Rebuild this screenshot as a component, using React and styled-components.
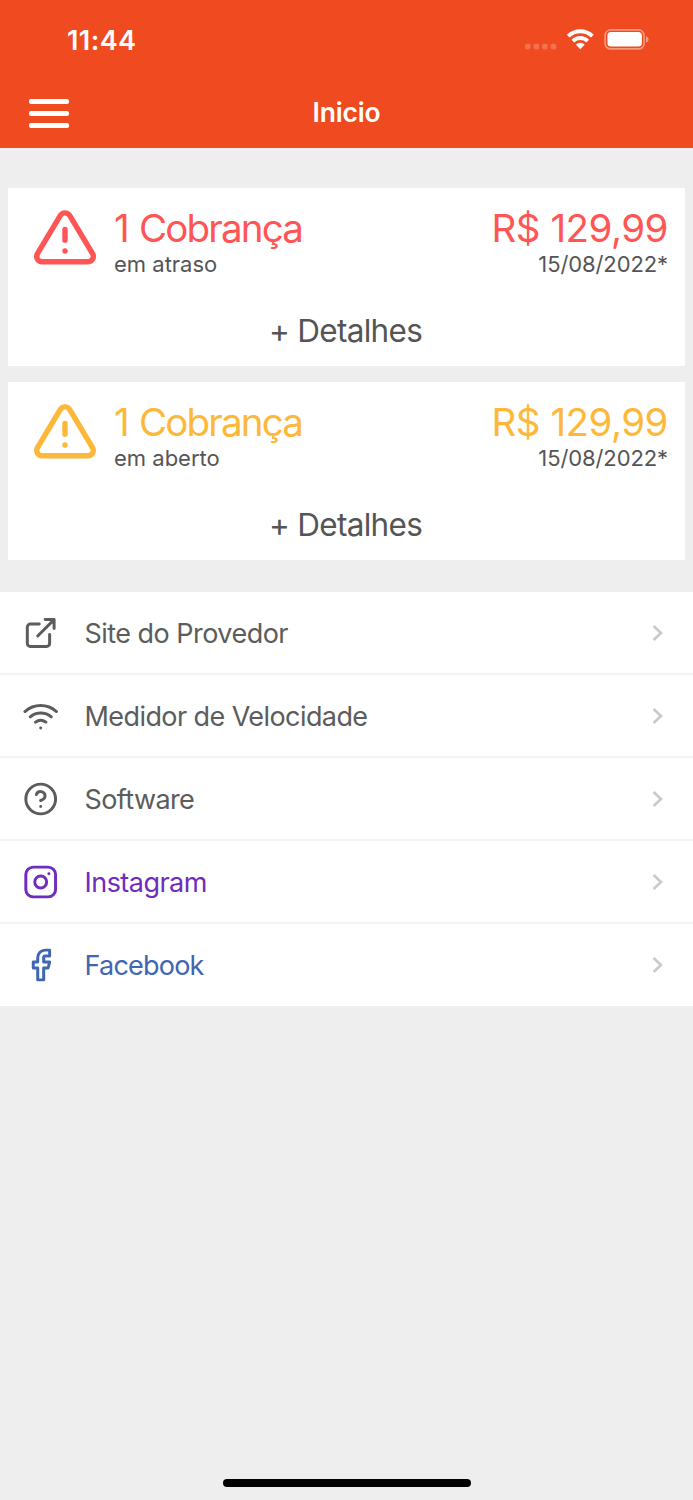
import React from 'react';
import styled, { createGlobalStyle } from 'styled-components';

const COLORS = {
  BRAND: '#f04a20',
  BACKGROUND: '#eeeeee',
  WHITE: '#ffffff',
  TEXT: '#555555',
  MENU: '#5c5c5c',
  LATE: '#ff5555',
  OPEN: '#fdb83a',
  INSTAGRAM: '#6f2cbe',
  FACEBOOK: '#4066b3',
  CHEVRON: '#c9c9ce',
  DIVIDER: '#f4f4f4',
};

const GlobalStyle = createGlobalStyle`
  body {
    margin: 0;
    background: ${COLORS.BACKGROUND};
    font-family: Inter, 'Liberation Sans', sans-serif;
  }
`;

const Screen = styled.div`
  display: flex;
  flex-direction: column;
  width: 693px;
  height: 1500px;
  overflow: hidden;

  background: ${COLORS.BACKGROUND};
`;

const Header = styled.header`
  height: 147.5px;
  flex: none;

  color: ${COLORS.WHITE};
  background: ${COLORS.BRAND};
`;

const StatusBar = styled.div`
  display: flex;
  align-items: center;
  justify-content: space-between;
  height: 79px;
  padding: 0 44px 0 67px;
`;

const Time = styled.span`
  margin-top: 1px;

  font-size: 27px;
  font-weight: 600;
  letter-spacing: 0.4px;
`;

const NavBar = styled.div`
  display: grid;
  grid-template-columns: 80px 1fr 80px;
  align-items: center;
  height: 67px;
`;

const MenuButton = styled.button`
  display: flex;
  flex-direction: column;
  gap: 7.8px;
  width: 40.5px;
  margin: 2px 0 0 28.5px;
  padding: 0;

  background: none;
  border: 0;
`;

const MenuBar = styled.span`
  height: 4.4px;

  background: ${COLORS.WHITE};
  border-radius: 2px;
`;

const Title = styled.h1`
  margin: -2px 0 0;

  font-size: 26.5px;
  font-weight: 600;
  letter-spacing: -0.2px;
  text-align: center;
`;

const Cards = styled.section`
  display: flex;
  flex-direction: column;
  gap: 16.5px;
  padding: 40.5px 8px 32px;
`;

const Card = styled.article`
  height: 177.5px;
  box-sizing: border-box;
  padding: 17px 17px 0 24px;

  color: ${COLORS.TEXT};
  background: ${COLORS.WHITE};
`;

const Summary = styled.div`
  display: flex;
`;

const SummaryText = styled.div`
  flex: 1;
  margin-left: ${({ $end }) => ($end ? 0 : 16)}px;

  text-align: ${({ $end }) => ($end ? 'right' : 'left')};
`;

const Amount = styled.div`
  color: ${({ $color }) => $color};
  font-size: 38.5px;
  line-height: 46px;
  letter-spacing: ${({ $spacing }) => $spacing}px;
  word-spacing: ${({ $wordSpacing = 0 }) => $wordSpacing}px;
  white-space: nowrap;
`;

const Caption = styled.div`
  font-size: 22px;
  line-height: 27px;
  letter-spacing: ${({ $spacing }) => $spacing}px;
`;

const Details = styled.div`
  margin: 33px -8px 0 -17px;

  font-size: 31.5px;
  line-height: 40px;
  letter-spacing: -0.7px;
  text-align: center;
`;

const Menu = styled.nav`
  background: ${COLORS.WHITE};
`;

const MenuItem = styled.div`
  display: flex;
  align-items: center;
  height: ${({ $last }) => ($last ? 82.5 : 83)}px;
  box-sizing: border-box;
  padding: ${({ $last }) => ($last ? 1 : 2)}px 28px 0 23px;

  color: ${({ $color }) => $color};
  border-bottom: ${({ $last }) => ($last ? 0 : 2)}px solid ${COLORS.DIVIDER};
`;

const MenuLabel = styled.span`
  flex: 1;
  margin-left: 25.5px;

  font-size: 27px;
  letter-spacing: ${({ $spacing }) => $spacing}px;
`;

const HomeIndicator = styled.div`
  width: 248px;
  height: 8.5px;
  margin: auto auto 13px;

  background: #000000;
  border-radius: 5px;
`;

const Feather = ({ children }) => (
  <svg
    width="36"
    height="36"
    viewBox="0.1 -0.1 24.2 24.2"
    fill="none"
    stroke="currentColor"
    strokeWidth="2"
    strokeLinecap="round"
    strokeLinejoin="round"
  >
    {children}
  </svg>
);

const AlertIcon = styled.svg`
  flex: none;
  width: 66px;
  height: 66px;

  color: ${({ $color }) => $color};
`;

const StatusIcons = () => (
  <svg width="126" height="30" viewBox="523 25 126 30" fill="none">
    <g fill="#fff" fillOpacity="0.22">
      <rect x="525" y="43.8" width="5.6" height="5.6" rx="2" />
      <rect x="533.6" y="43.8" width="5.6" height="5.6" rx="2" />
      <rect x="542.1" y="43.8" width="5.6" height="5.6" rx="2" />
      <rect x="550.7" y="43.8" width="5.6" height="5.6" rx="2" />
    </g>
    <g stroke="#fff" strokeWidth="4">
      <path d="M568.2 36.2a17.2 17.2 0 0 1 24.2 0" />
      <path d="M572.9 41.1a10.6 10.6 0 0 1 14.8 0" />
    </g>
    <path d="M575.9 44.5a6.4 6.4 0 0 1 8.8 0l-4.4 4.7z" fill="#fff" />
    <rect
      x="605.1"
      y="29.9"
      width="39"
      height="19"
      rx="5.5"
      stroke="#fff"
      strokeOpacity="0.42"
      strokeWidth="1.7"
    />
    <rect x="607.4" y="32.1" width="34.5" height="14.5" rx="3.5" fill="#fff" />
    <path d="M646 36.2c3.4 1.2 3.4 5.2 0 6.4z" fill="#fff" fillOpacity="0.45" />
  </svg>
);

const CHARGES = [
  { status: 'em atraso', color: COLORS.LATE },
  { status: 'em aberto', color: COLORS.OPEN },
];

const MENU_ITEMS = [
  {
    label: 'Site do Provedor',
    color: COLORS.MENU,
    spacing: -0.53,
    icon: (
      <Feather>
        <path d="M18 13v6a2 2 0 0 1-2 2H5a2 2 0 0 1-2-2V8a2 2 0 0 1 2-2h6" />
        <path d="M15 3h6v6M10 14L21 3" />
      </Feather>
    ),
  },
  {
    label: 'Medidor de Velocidade',
    color: COLORS.MENU,
    spacing: -0.58,
    icon: (
      <Feather>
        <path d="M5 12.55a11 11 0 0 1 14.08 0M1.42 9a16 16 0 0 1 21.16 0M8.53 16.11a6 6 0 0 1 6.95 0M12 20h.01" />
      </Feather>
    ),
  },
  {
    label: 'Software',
    color: COLORS.MENU,
    spacing: -0.6,
    icon: (
      <Feather>
        <circle cx="12" cy="12" r="10" />
        <path d="M9.09 9a3 3 0 0 1 5.83 1c0 2-3 3-3 3M12 17h.01" />
      </Feather>
    ),
  },
  {
    label: 'Instagram',
    color: COLORS.INSTAGRAM,
    spacing: -0.53,
    icon: (
      <Feather>
        <rect x="2" y="2" width="20" height="20" rx="5" />
        <circle cx="12" cy="12" r="4" />
        <path d="M17.5 6.5h.01" />
      </Feather>
    ),
  },
  {
    label: 'Facebook',
    color: COLORS.FACEBOOK,
    spacing: -0.78,
    icon: (
      <Feather>
        <path d="M18 2h-3a5 5 0 0 0-5 5v3H7v4h3v8h4v-8h3l1-4h-4V7a1 1 0 0 1 1-1h3z" />
      </Feather>
    ),
  },
];

const Chevron = () => (
  <svg width="14" height="20" viewBox="0 0 14 20" fill="none">
    <path d="M2.6 3L10 10l-7.4 7" stroke={COLORS.CHEVRON} strokeWidth="2.6" />
  </svg>
);

const Charge = ({ status, color }) => (
  <Card>
    <Summary>
      <AlertIcon
        $color={color}
        viewBox="-0.2 0 24.4 24.4"
        fill="none"
        stroke="currentColor"
        strokeWidth="2"
        strokeLinecap="round"
        strokeLinejoin="round"
      >
        <path d="M10.29 3.86L1.82 18a2 2 0 0 0 1.71 3h16.94a2 2 0 0 0 1.71-3L13.71 3.86a2 2 0 0 0-3.42 0z" />
        <path d="M12 9v4M12 17h.01" />
      </AlertIcon>
      <SummaryText>
        <Amount $color={color} $spacing={-1.8} $wordSpacing={2}>
          1 Cobrança
        </Amount>
        <Caption $spacing={0}>{status}</Caption>
      </SummaryText>
      <SummaryText $end>
        <Amount $color={color} $spacing={-0.5}>
          R$ 129,99
        </Amount>
        <Caption $spacing={-0.1}>15/08/2022*</Caption>
      </SummaryText>
    </Summary>
    <Details>+ Detalhes</Details>
  </Card>
);

const App = () => (
  <Screen>
    <GlobalStyle />

    <Header>
      <StatusBar>
        <Time>11:44</Time>
        <StatusIcons />
      </StatusBar>
      <NavBar>
        <MenuButton aria-label="Menu">
          <MenuBar />
          <MenuBar />
          <MenuBar />
        </MenuButton>
        <Title>Inicio</Title>
      </NavBar>
    </Header>

    <Cards>
      {CHARGES.map((charge) => (
        <Charge key={charge.status} {...charge} />
      ))}
    </Cards>

    <Menu>
      {MENU_ITEMS.map(({ label, color, spacing, icon }, index) => (
        <MenuItem
          key={label}
          $color={color}
          $last={index === MENU_ITEMS.length - 1}
        >
          {icon}
          <MenuLabel $spacing={spacing}>{label}</MenuLabel>
          <Chevron />
        </MenuItem>
      ))}
    </Menu>

    <HomeIndicator />
  </Screen>
);

export default App;
